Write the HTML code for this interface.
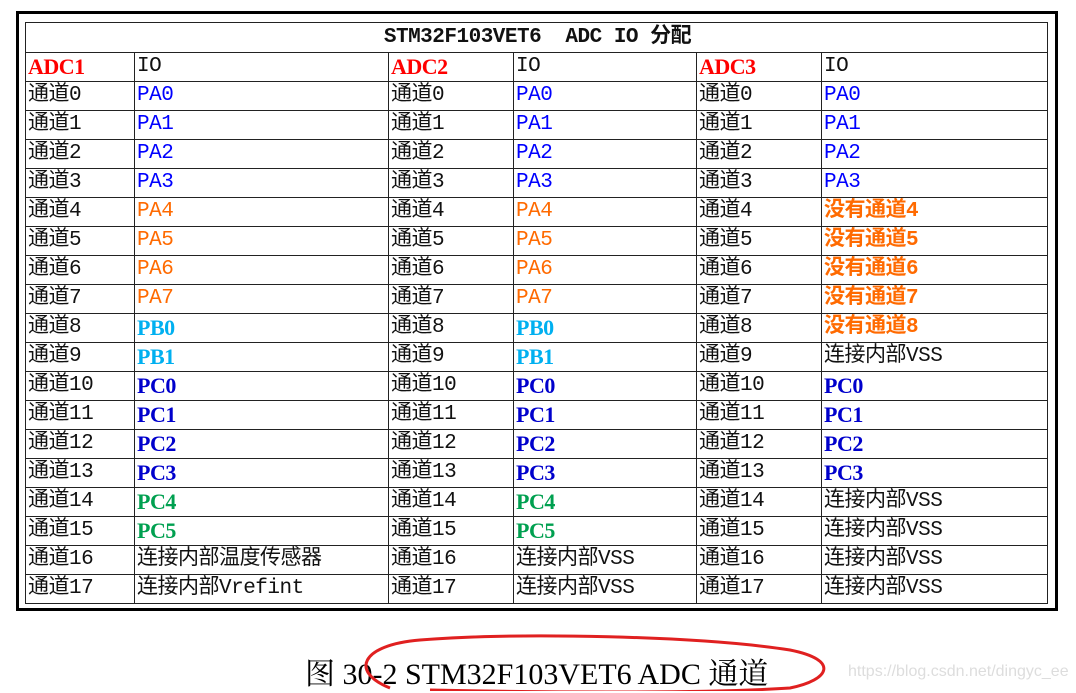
<!DOCTYPE html>
<html><head><meta charset="utf-8"><style>
body{margin:0;width:1076px;height:691px;background:#fff;position:relative;overflow:hidden;font-family:"Liberation Mono","Noto Sans CJK SC",monospace;}
#box{position:absolute;left:16px;top:11px;width:1036px;height:594px;border:3px solid #000;}
table{position:absolute;left:25px;top:22px;border-collapse:collapse;table-layout:fixed;}
td{border:1px solid #222;height:28px;padding:0 0 0 2px;font-size:21px;line-height:28px;white-space:nowrap;overflow:hidden;color:#111;vertical-align:bottom;letter-spacing:-0.5px}
.t{text-align:center;font-weight:bold;font-size:21px;height:29px}
.r{color:#f00;font-weight:bold;font-family:"Liberation Serif","Noto Serif CJK SC",serif;font-size:22px}
.b{color:#0000ff}.o{color:#ff6a00}.ob{color:#ff6a00;font-weight:bold}
.c{color:#00b0f0;font-weight:bold;font-family:"Liberation Serif",serif;font-size:22px}
.d{color:#0000cc;font-weight:bold;font-family:"Liberation Serif",serif;font-size:22px}
.g{color:#00a050;font-weight:bold;font-family:"Liberation Serif",serif;font-size:22px}
#cap{position:absolute;left:305px;top:649px;font-family:"Liberation Serif","Noto Serif CJK SC",serif;font-size:30px;color:#000}
#wm{position:absolute;left:848px;top:663px;font-family:"Liberation Sans",sans-serif;font-size:16px;color:#ddd}
</style></head><body>
<div id="box"></div>
<table>
<colgroup><col style="width:109px"><col style="width:254px"><col style="width:125px"><col style="width:183px"><col style="width:125px"><col style="width:226px"></colgroup>
<tr><td class="t" colspan="6">STM32F103VET6&nbsp; ADC IO 分配</td></tr>
<tr><td class="r">ADC1</td><td>IO</td><td class="r">ADC2</td><td>IO</td><td class="r">ADC3</td><td>IO</td></tr>
<tr><td>通道0</td><td class="b">PA0</td><td>通道0</td><td class="b">PA0</td><td>通道0</td><td class="b">PA0</td></tr>
<tr><td>通道1</td><td class="b">PA1</td><td>通道1</td><td class="b">PA1</td><td>通道1</td><td class="b">PA1</td></tr>
<tr><td>通道2</td><td class="b">PA2</td><td>通道2</td><td class="b">PA2</td><td>通道2</td><td class="b">PA2</td></tr>
<tr><td>通道3</td><td class="b">PA3</td><td>通道3</td><td class="b">PA3</td><td>通道3</td><td class="b">PA3</td></tr>
<tr><td>通道4</td><td class="o">PA4</td><td>通道4</td><td class="o">PA4</td><td>通道4</td><td class="ob">没有通道4</td></tr>
<tr><td>通道5</td><td class="o">PA5</td><td>通道5</td><td class="o">PA5</td><td>通道5</td><td class="ob">没有通道5</td></tr>
<tr><td>通道6</td><td class="o">PA6</td><td>通道6</td><td class="o">PA6</td><td>通道6</td><td class="ob">没有通道6</td></tr>
<tr><td>通道7</td><td class="o">PA7</td><td>通道7</td><td class="o">PA7</td><td>通道7</td><td class="ob">没有通道7</td></tr>
<tr><td>通道8</td><td class="c">PB0</td><td>通道8</td><td class="c">PB0</td><td>通道8</td><td class="ob">没有通道8</td></tr>
<tr><td>通道9</td><td class="c">PB1</td><td>通道9</td><td class="c">PB1</td><td>通道9</td><td>连接内部VSS</td></tr>
<tr><td>通道10</td><td class="d">PC0</td><td>通道10</td><td class="d">PC0</td><td>通道10</td><td class="d">PC0</td></tr>
<tr><td>通道11</td><td class="d">PC1</td><td>通道11</td><td class="d">PC1</td><td>通道11</td><td class="d">PC1</td></tr>
<tr><td>通道12</td><td class="d">PC2</td><td>通道12</td><td class="d">PC2</td><td>通道12</td><td class="d">PC2</td></tr>
<tr><td>通道13</td><td class="d">PC3</td><td>通道13</td><td class="d">PC3</td><td>通道13</td><td class="d">PC3</td></tr>
<tr><td>通道14</td><td class="g">PC4</td><td>通道14</td><td class="g">PC4</td><td>通道14</td><td>连接内部VSS</td></tr>
<tr><td>通道15</td><td class="g">PC5</td><td>通道15</td><td class="g">PC5</td><td>通道15</td><td>连接内部VSS</td></tr>
<tr><td>通道16</td><td>连接内部温度传感器</td><td>通道16</td><td>连接内部VSS</td><td>通道16</td><td>连接内部VSS</td></tr>
<tr><td>通道17</td><td>连接内部Vrefint</td><td>通道17</td><td>连接内部VSS</td><td>通道17</td><td>连接内部VSS</td></tr>
</table>
<div id="cap">图 30-2 STM32F103VET6 ADC 通道</div>
<svg style="position:absolute;left:0;top:0" width="1076" height="691"><path d="M390 688 C350 672 360 645 420 640 C520 632 700 636 790 650 C840 660 830 680 790 688 C700 694 520 692 430 690" fill="none" stroke="#e02020" stroke-width="3"/></svg>
<div id="wm">https://blog.csdn.net/dingyc_ee</div>
</body></html>
